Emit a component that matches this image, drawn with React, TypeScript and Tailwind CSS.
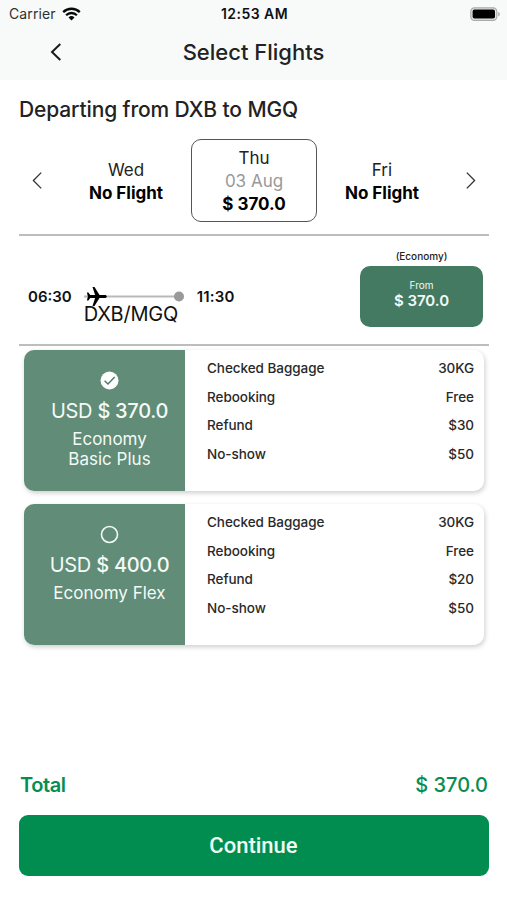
interface Fare {
  price: string;
  name: string;
  selected: boolean;
  rules: { label: string; value: string }[];
}

const fares: Fare[] = [
  {
    price: '$ 370.0',
    name: 'Economy Basic Plus',
    selected: true,
    rules: [
      { label: 'Checked Baggage', value: '30KG' },
      { label: 'Rebooking', value: 'Free' },
      { label: 'Refund', value: '$30' },
      { label: 'No-show', value: '$50' },
    ],
  },
  {
    price: '$ 400.0',
    name: 'Economy Flex',
    selected: false,
    rules: [
      { label: 'Checked Baggage', value: '30KG' },
      { label: 'Rebooking', value: 'Free' },
      { label: 'Refund', value: '$20' },
      { label: 'No-show', value: '$50' },
    ],
  },
];

const StatusBar = () => (
  <div className="grid h-[27px] grid-cols-3 items-center pl-[9px] pr-[7px] text-[14px]">
    <div className="flex items-center gap-[6px]">
      <span className="tracking-[0.1px] text-[#2f3131]">Carrier</span>
      <svg width="19" height="14" viewBox="0 0 19 14" fill="none" stroke="#080808" strokeWidth="2.3">
        <path d="M1.2 5.1a11.9 11.9 0 0 1 16.6 0" />
        <path d="M4.1 8.2a7.7 7.7 0 0 1 10.8 0" />
        <path d="M9.5 13.6 6.5 10.5a4.3 4.3 0 0 1 6 0z" fill="#080808" stroke="none" />
      </svg>
    </div>
    <span className="text-center font-semibold tracking-[0.45px] text-[#111]">12:53 AM</span>
    <svg className="justify-self-end" width="30" height="14" viewBox="0 0 30 14">
      <rect x="0.8" y="0.8" width="26" height="12.6" rx="3.6" fill="#e4e6e5" stroke="#a9abaa" strokeWidth="1.2" />
      <rect x="2.6" y="2.6" width="22.4" height="9" rx="1.8" fill="#000" />
      <path d="M28.2 5v4.4c1-.4 1.6-1.2 1.6-2.2s-.6-1.8-1.6-2.2z" fill="#a9abaa" />
    </svg>
  </div>
);

const Chevron = ({ flip = false }: { flip?: boolean }) => (
  <svg
    className={flip ? 'rotate-180' : ''}
    width="10"
    height="17"
    viewBox="0 0 10 17"
    fill="none"
    stroke="#333"
    strokeWidth="1.3"
  >
    <path d="M9.2.6 1.4 8.5l7.8 7.900" />
  </svg>
);

const EmptyDay = ({ day }: { day: string }) => (
  <div className="w-[126px] pt-[2px] text-center text-[17px] leading-[23px]">
    <p className="text-[#222]">{day}</p>
    <p className="font-bold">No Flight</p>
  </div>
);

const FareCard = ({ fare }: { fare: Fare }) => (
  <div className="flex h-[141px] overflow-hidden rounded-[10px] bg-white shadow-[1px_2px_5px_rgba(0,0,0,0.2)]">
    <div className="flex w-[161px] flex-col items-center bg-[#608c78] pl-[10px] pt-[21px] text-[#f4faf6]">
      <svg width="19" height="19" viewBox="0 0 19 19" fill="none">
        {fare.selected ? (
          <>
            <circle cx="9.5" cy="9.5" r="9" fill="#fff" />
            <path d="m4.6 9.7 3.4 3.3 6.7-7" stroke="#4d7d67" strokeWidth="1.5" />
          </>
        ) : (
          <circle cx="9.5" cy="9.5" r="8" stroke="#f4faf6" strokeWidth="1.6" />
        )}
      </svg>
      <p className="mt-[7px] text-[20px] leading-[28px] tracking-[-0.3px]">
        USD <span className="font-medium">{fare.price}</span>
      </p>
      <p className="mt-[4px] w-[120px] text-center text-[17px] leading-[20px]">{fare.name}</p>
    </div>
    <dl className="flex flex-1 flex-col pl-[22px] pr-[10px] pt-[4px] text-[13.5px] font-medium tracking-[-0.05px] text-[#292929]">
      {fare.rules.map((rule) => (
        <div key={rule.label} className="flex h-[28.5px] items-center justify-between">
          <dt>{rule.label}</dt>
          <dd>{rule.value}</dd>
        </div>
      ))}
    </dl>
  </div>
);

const App = () => {
  return (
    <main className="flex h-[900px] w-full flex-col bg-white font-['Inter',sans-serif] text-black">
      <header className="h-20 bg-[#f8faf9]">
        <StatusBar />
        <div className="grid h-[50px] grid-cols-[1fr_auto_1fr] items-center">
          <svg className="ml-[50px]" width="12" height="18" viewBox="0 0 12 18" fill="none" stroke="#1a1a1a" strokeWidth="2">
            <path d="M10.3 1 2 9l8.3 8" />
          </svg>
          <h1 className="text-[22px] font-medium text-[#222]">Select Flights</h1>
        </div>
      </header>

      <div className="flex flex-1 flex-col pl-[19px] pr-[18px]">
        <h2 className="flex h-[59px] items-center text-[21px] font-medium tracking-[-0.12px] text-[#222]">
          Departing from DXB to MGQ
        </h2>

        {/* Date picker */}
        <div className="flex h-[83px] items-center justify-between px-[13px]">
          <Chevron />
          <div className="flex items-center gap-[2px]">
            <EmptyDay day="Wed" />
            <div className="h-[83px] w-[126px] rounded-[10px] border-[1.5px] border-[#555] pt-[7px] text-center text-[17px] leading-[23px]">
              <p className="text-[#222]">Thu</p>
              <p className="text-[#999]">03 Aug</p>
              <p className="font-bold">$ 370.0</p>
            </div>
            <EmptyDay day="Fri" />
          </div>
          <Chevron flip />
        </div>

        {/* Flight */}
        <section className="mt-3 flex h-[112px] items-start justify-between border-y-2 border-[#bdbdbd] pl-[9px] pr-[6px]">
          <div className="mt-[51px] flex items-start text-[15px] font-semibold leading-[20px] text-[#111]">
            <span>06:30</span>
            <div className="ml-[12px] w-[100px]">
              <svg width="100" height="20" viewBox="0 0 100 20">
                <path d="M0 9.5h95" stroke="#b9b9b9" strokeWidth="1.8" />
                <circle cx="95" cy="9.5" r="5" fill="#999" />
                <path
                  d="M22.8 9.5c0-.9-.9-1.500-1.800-1.500h-5.500L10.500 0H8.500l2.600 8H6.200L4.400 5.600H2.900l1 3.900-1 3.900h1.500L6.200 11h4.900l-2.600 8h2l5-8H21c.9 0 1.800-.6 1.800-1.500z"
                  fill="#000"
                />
              </svg>
              <p className="-mt-[3px] text-[20px] font-normal tracking-[-0.25px]">DXB/MGQ</p>
            </div>
            <span className="ml-[13px] tracking-[0.2px]">11:30</span>
          </div>
          <div className="w-[123px] text-center">
            <p className="h-[30px] pt-[12px] text-[10px] font-medium leading-[16px] text-[#222]">(Economy)</p>
            <div className="h-[61px] rounded-[10px] bg-[#457a62] pt-[12px] text-[#f1faf5]">
              <p className="text-[10px] leading-[14px]">From</p>
              <p className="text-[15px] font-semibold leading-[17px]">$ 370.0</p>
            </div>
          </div>
        </section>

        <div className="mt-[4px] flex flex-col gap-[13px] px-[5px]">
          {fares.map((fare) => (
            <FareCard key={fare.name} fare={fare} />
          ))}
        </div>

        <footer className="mb-[24px] mt-auto">
          <div className="mb-[15px] flex items-center justify-between pl-px pr-px text-[20px] font-medium text-[#078d50]">
            <span className="font-semibold tracking-[-0.4px]">Total</span>
            <span>$ 370.0</span>
          </div>
          <button
            type="button"
            className="h-[61px] w-full rounded-[9px] bg-[#028d50] pr-px font-['Roboto',sans-serif] text-[22px] font-medium text-[#eefbf4]"
          >
            Continue
          </button>
        </footer>
      </div>
    </main>
  );
};

export default App;
